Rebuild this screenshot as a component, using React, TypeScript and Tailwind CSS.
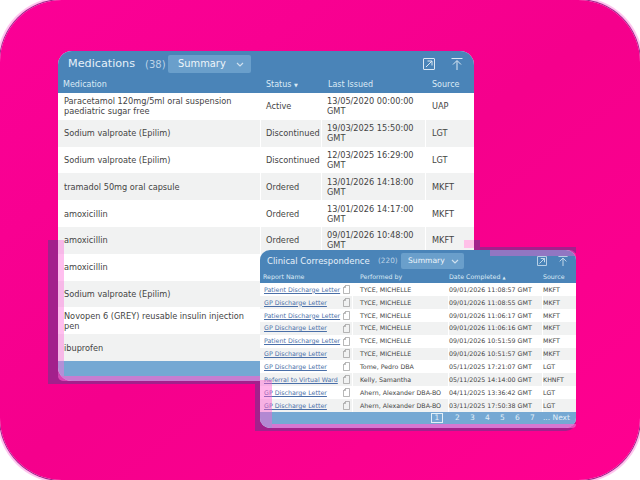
// only the medication name is visible on the last rows, the card on top hides the rest
const medications = [
  ["Paracetamol 120mg/5ml oral suspension paediatric sugar free", "Active", "13/05/2020 00:00:00 GMT", "UAP"],
  ["Sodium valproate (Epilim)", "Discontinued", "19/03/2025 15:50:00 GMT", "LGT"],
  ["Sodium valproate (Epilim)", "Discontinued", "12/03/2025 16:29:00 GMT", "LGT"],
  ["tramadol 50mg oral capsule", "Ordered", "13/01/2026 14:18:00 GMT", "MKFT"],
  ["amoxicillin", "Ordered", "13/01/2026 14:17:00 GMT", "MKFT"],
  ["amoxicillin", "Ordered", "09/01/2026 10:48:00 GMT", "MKFT"],
  ["amoxicillin", "", "", ""],
  ["Sodium valproate (Epilim)", "", "", ""],
  ["Novopen 6 (GREY) reusable insulin injection pen", "", "", ""],
  ["ibuprofen", "", "", ""],
];

const letters = [
  ["Patient Discharge Letter", "TYCE, MICHELLE", "09/01/2026 11:08:57 GMT", "MKFT"],
  ["GP Discharge Letter", "TYCE, MICHELLE", "09/01/2026 11:08:55 GMT", "MKFT"],
  ["Patient Discharge Letter", "TYCE, MICHELLE", "09/01/2026 11:06:17 GMT", "MKFT"],
  ["GP Discharge Letter", "TYCE, MICHELLE", "09/01/2026 11:06:16 GMT", "MKFT"],
  ["Patient Discharge Letter", "TYCE, MICHELLE", "09/01/2026 10:51:59 GMT", "MKFT"],
  ["GP Discharge Letter", "TYCE, MICHELLE", "09/01/2026 10:51:57 GMT", "MKFT"],
  ["GP Discharge Letter", "Tome, Pedro DBA", "05/11/2025 17:21:07 GMT", "LGT"],
  ["Referral to Virtual Ward", "Kelly, Samantha", "05/11/2025 14:14:00 GMT", "KHNFT"],
  ["GP Discharge Letter", "Ahern, Alexander DBA-BO", "04/11/2025 13:36:42 GMT", "LGT"],
  ["GP Discharge Letter", "Ahern, Alexander DBA-BO", "03/11/2025 17:50:38 GMT", "LGT"],
];

function PopOutIcon({ size }: { size: number }) {
  return (
    <svg width={size} height={size} viewBox="0 0 12 12" fill="none" stroke="#dbe8f4" strokeWidth="1">
      <rect x="0.5" y="0.5" width="11" height="11" rx="0.5" />
      <path d="M3 9L9 3M4.5 3H9V7.5" />
    </svg>
  );
}

function TopIcon({ size }: { size: number }) {
  return (
    <svg width={size} height={size} viewBox="0 0 12 12" fill="none" stroke="#dbe8f4" strokeWidth="1">
      <path d="M0.5 0.5H11.5M6 12V3M2 6.5L6 2.5L10 6.5" />
    </svg>
  );
}

function DocIcon() {
  return (
    <svg width="7" height="9" viewBox="0 0 7 9" fill="none" stroke="#9a9a9a" strokeWidth="0.7" className="shrink-0">
      <path d="M2.5 0.5H6.5V8.5H0.5V2.5Z" />
      <path d="M2.5 0.5V2.5H0.5" />
    </svg>
  );
}

function Chevron() {
  return (
    <svg width="8" height="5" viewBox="0 0 8 5" fill="none" stroke="#cfe0ef" strokeWidth="1.2">
      <path d="M1 1L4 4L7 1" />
    </svg>
  );
}

export default function App() {
  return (
    <div className="relative w-[640px] h-[480px] overflow-hidden bg-white font-['DejaVu_Sans',sans-serif]">
      {/* pink backdrop, the ring only shows in the corners */}
      <div className="absolute inset-0 rounded-[62px] bg-gradient-to-br from-[#fb0096] via-[#f5008c] to-[#ff0090] shadow-[0_0_0_1px_#a0248c,0_0_0_3px_#ffc4ee]" />

      {/* flat shadows behind the cards */}
      <div className="absolute left-[48px] top-[240px] w-[230px] h-[144px] bg-[#a3208c]" />
      <div className="absolute left-[255px] top-[381px] w-[321px] h-[50px] rounded-br-[10px] bg-[#a3208c]" />
      <div className="absolute left-[474px] top-[240px] w-[6px] h-[10px] bg-[#a3208c]" />
      <div className="absolute left-[474px] top-[247px] w-[102px] h-[6px] bg-[#a3208c]" />

      <div className="relative ml-[58px] mt-[51px] w-[416px] h-[330px] rounded-[14px] overflow-hidden flex flex-col bg-white">
        <div className="h-[42px] bg-[#4a84b8] flex flex-col">
          <div className="h-[25px] flex items-center pl-[10px] pr-[11px] pt-[1px]">
            <span className="w-[67px] text-[11.2px] text-[#e6f0f8] whitespace-nowrap">Medications</span>
            <span className="ml-[10px] w-[20px] text-[10px] text-[#bcd3e7]">(38)</span>
            <div className="ml-[3px] w-[83px] h-[18px] rounded-[2px] bg-[#6a9fcb] flex items-center justify-between pl-[10px] pr-[7px]">
              <span className="text-[9.9px] text-[#eef5fa]">Summary</span>
              <Chevron />
            </div>
            <div className="ml-auto flex items-center gap-[16px]">
              <PopOutIcon size={12} />
              <TopIcon size={12} />
            </div>
          </div>
          <div className="flex-1 flex items-center text-[8px] text-[#dcebf6]">
            <span className="w-[203px] pl-[5px]">Medication</span>
            <span className="w-[62px] pl-[5px]">Status <span className="text-[5px]">▼</span></span>
            <span className="w-[104px] pl-[5px]">Last Issued</span>
            <span className="pl-[5px]">Source</span>
          </div>
        </div>
        <div className="h-[268px] flex flex-col text-[8.2px] leading-[10px] text-[#444444]">
          {medications.map((m, i) => (
            <div key={i} className={`flex-1 flex items-stretch ${i % 2 === 1 ? "bg-[#f1f2f2]" : "bg-white"}`}>
              <div className="w-[203px] pl-[6px] pr-[2px] flex items-center border-r border-white">{m[0]}</div>
              <div className="w-[61px] pl-[5px] flex items-center border-r border-white">{m[1]}</div>
              <div className="w-[104px] pl-[5px] flex items-center border-r border-white">{m[2]}</div>
              <div className="pl-[6px] flex items-center">{m[3]}</div>
            </div>
          ))}
        </div>
        <div className="flex-1 bg-[#75a8d3]" />
      </div>

      {/* pink tint over the edge of the medications card */}
      <div className="absolute left-[58px] top-[240px] w-[6px] h-[136px] bg-[#ff70dc]/45" />
      <div className="absolute left-[58px] top-[376px] w-[202px] h-[5px] rounded-bl-[10px] bg-[#ff60d0]/60" />
      <div className="absolute left-[464px] top-[240px] w-[10px] h-[8px] bg-[#ffc0e8]" />

      <div className="absolute left-[260px] top-[250px] w-[316px] h-[178px] rounded-[10px] overflow-hidden flex flex-col bg-white">
        <div className="h-[33px] bg-[#4a84b8] flex flex-col">
          <div className="h-[20px] flex items-center pl-[7px] pr-[8px] pt-[2px]">
            <span className="w-[104px] text-[8.5px] text-[#e6f0f8] whitespace-nowrap">Clinical Correspondence</span>
            <span className="ml-[7px] w-[20px] text-[7.3px] text-[#bcd3e7]">(220)</span>
            <div className="ml-[3px] w-[63px] h-[16px] rounded-[2px] bg-[#6a9fcb] flex items-center justify-between pl-[7px] pr-[5px]">
              <span className="text-[7.6px] text-[#eef5fa]">Summary</span>
              <Chevron />
            </div>
            <div className="ml-auto flex items-center gap-[11px]">
              <PopOutIcon size={10} />
              <TopIcon size={10} />
            </div>
          </div>
          <div className="flex-1 flex items-center text-[6.3px] text-[#dcebf6]">
            <span className="w-[100px] pl-[3px]">Report Name</span>
            <span className="w-[89px]">Performed by</span>
            <span className="w-[94px]">Date Completed <span className="text-[4px]">▲</span></span>
            <span>Source</span>
          </div>
        </div>
        <div className="h-[129px] flex flex-col text-[6.3px] text-[#444444]">
          {letters.map((l, i) => (
            <div key={i} className={`flex-1 flex items-stretch ${i % 2 === 1 ? "bg-[#f1f2f2]" : "bg-white"}`}>
              <div className="w-[93px] pl-[4px] flex items-center justify-between pr-[2px] border-r border-white whitespace-nowrap">
                <span className="text-[#4a6fa8] underline">{l[0]}</span>
                <DocIcon />
              </div>
              <div className="w-[96px] pl-[7px] flex items-center border-r border-white whitespace-nowrap">{l[1]}</div>
              <div className="w-[94px] flex items-center border-r border-white whitespace-nowrap">{l[2]}</div>
              <div className="flex items-center">{l[3]}</div>
            </div>
          ))}
        </div>
        <div className="flex-1 bg-[#75a8d3] flex items-center justify-end pr-[6px] pb-[4px] text-[7.5px] text-[#e3eff8]">
          <span className="w-[12px] h-[10px] border border-[#e3eff8] flex items-center justify-center mr-[7px]">1</span>
          <span className="w-[15px] text-center">2</span>
          <span className="w-[15px] text-center">3</span>
          <span className="w-[15px] text-center">4</span>
          <span className="w-[15px] text-center">5</span>
          <span className="w-[15px] text-center">6</span>
          <span className="w-[15px] text-center">7</span>
          <span className="ml-[3px]">... Next</span>
        </div>
      </div>

      {/* pink tint over the edges of the correspondence card */}
      <div className="absolute left-[260px] top-[380px] w-[12px] h-[48px] rounded-bl-[10px] bg-[#ff60d0]/45" />
      <div className="absolute left-[272px] top-[424px] w-[304px] h-[4px] rounded-br-[10px] bg-[#ff60d0]/70" />
      <div className="absolute left-[490px] top-[250px] w-[86px] h-[6px] rounded-tr-[10px] bg-[#ff60d0]/40" />
    </div>
  );
}
